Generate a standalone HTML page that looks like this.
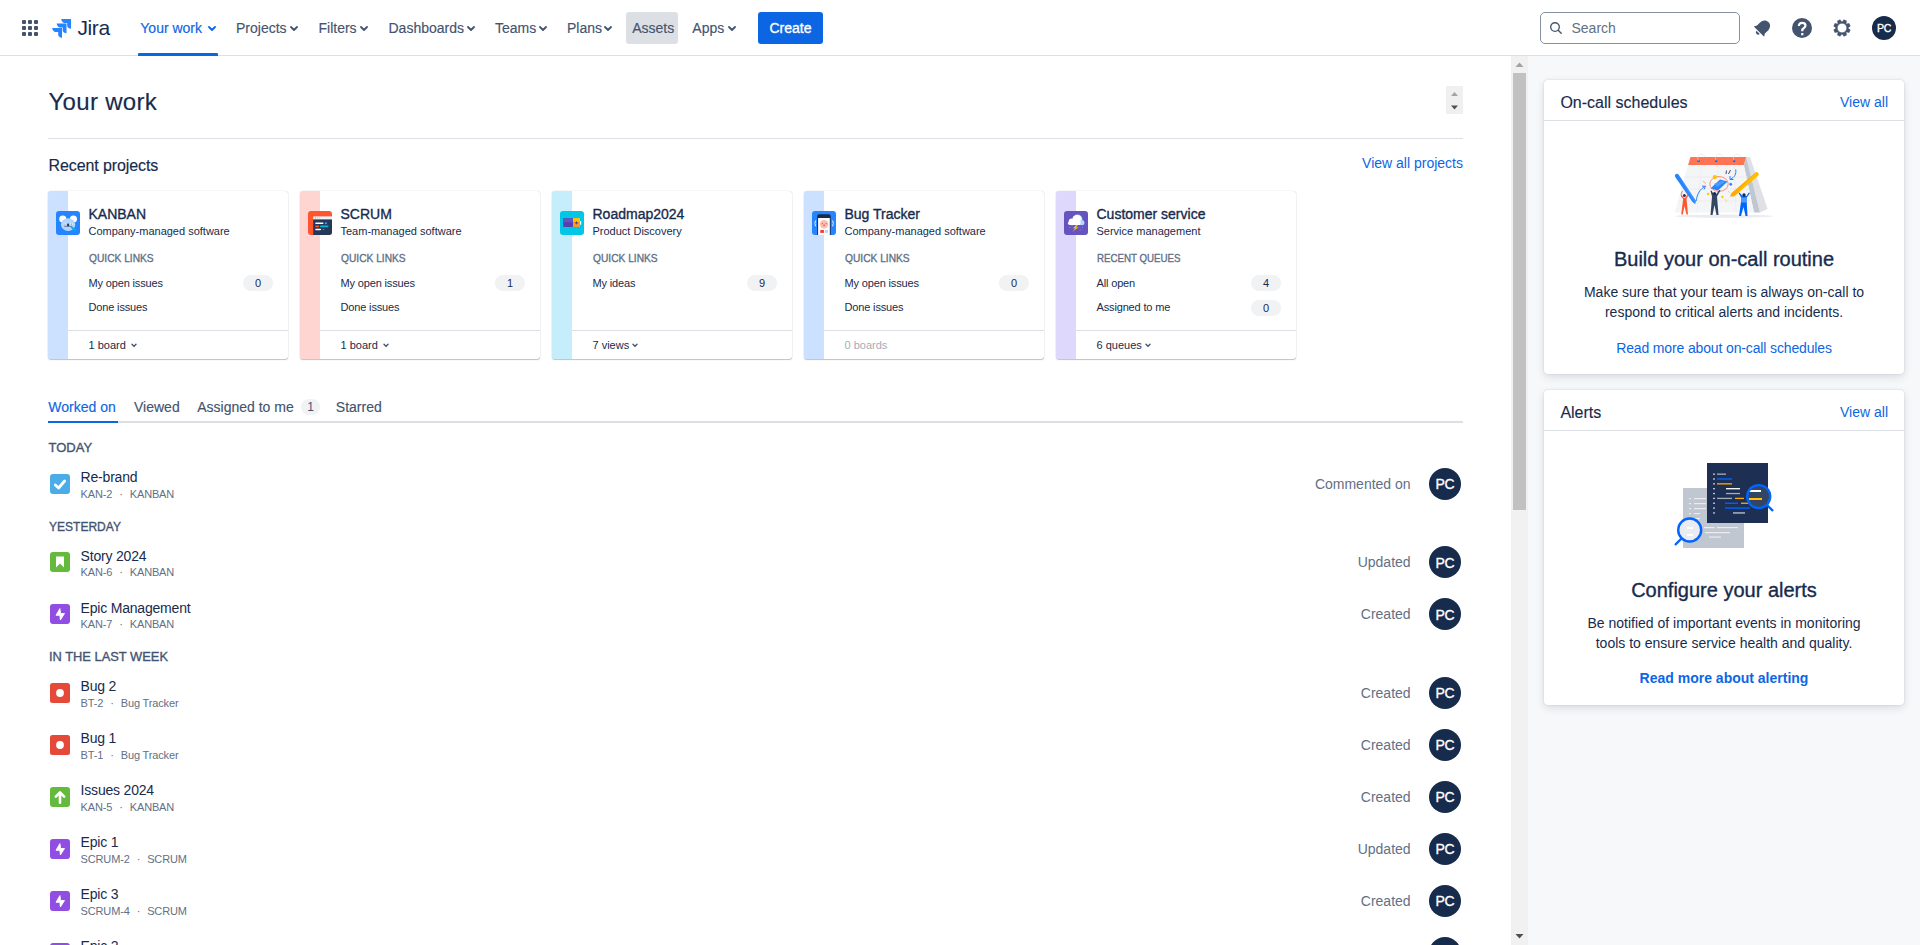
<!DOCTYPE html>
<html><head><meta charset="utf-8"><title>Your work - Jira</title>
<style>
html,body{margin:0;padding:0;width:1920px;height:945px;overflow:hidden;background:#fff}
body{position:relative;font-family:"Liberation Sans",sans-serif;-webkit-font-smoothing:antialiased}
.t{position:absolute;white-space:nowrap}
.dot{margin:0 7px}
.sb{-webkit-text-stroke:0.35px currentColor}
.sm{-webkit-text-stroke:0.15px currentColor}
</style></head><body>
<div style="position:absolute;left:0px;top:0px;width:1920px;height:56px;background:#fff"></div>
<div style="position:absolute;left:0px;top:55px;width:1920px;height:1px;background:#DCDFE4"></div>
<div style="position:absolute;left:22px;top:20px;width:4px;height:4px;background:#44546F;border-radius:1px"></div>
<div style="position:absolute;left:28px;top:20px;width:4px;height:4px;background:#44546F;border-radius:1px"></div>
<div style="position:absolute;left:34px;top:20px;width:4px;height:4px;background:#44546F;border-radius:1px"></div>
<div style="position:absolute;left:22px;top:26px;width:4px;height:4px;background:#44546F;border-radius:1px"></div>
<div style="position:absolute;left:28px;top:26px;width:4px;height:4px;background:#44546F;border-radius:1px"></div>
<div style="position:absolute;left:34px;top:26px;width:4px;height:4px;background:#44546F;border-radius:1px"></div>
<div style="position:absolute;left:22px;top:32px;width:4px;height:4px;background:#44546F;border-radius:1px"></div>
<div style="position:absolute;left:28px;top:32px;width:4px;height:4px;background:#44546F;border-radius:1px"></div>
<div style="position:absolute;left:34px;top:32px;width:4px;height:4px;background:#44546F;border-radius:1px"></div>
<svg style="position:absolute;left:52px;top:19px" width="20" height="20" viewBox="0 0 20 20">
<path d="M9.1 0.1 H19 V10 C19 10 17 9.6 16 8.6 C15.4 8 15.2 7 15.2 7 V4 H12.3 C12.3 4 11.2 3.8 10.5 3 C9.5 2 9.1 0.1 9.1 0.1Z" fill="#2684FF"/>
<path d="M4.6 4.6 H14.5 V14.5 C14.5 14.5 12.5 14.1 11.5 13.1 C10.9 12.5 10.7 11.5 10.7 11.5 V8.5 H7.8 C7.8 8.5 6.7 8.3 6 7.5 C5 6.5 4.6 4.6 4.6 4.6Z" fill="#2684FF"/>
<path d="M0.1 9.1 H10 V19 C10 19 8 18.6 7 17.6 C6.4 17 6.2 16 6.2 16 V13 H3.3 C3.3 13 2.2 12.8 1.5 12 C0.5 11 0.1 9.1 0.1 9.1Z" fill="#2684FF"/>
</svg>
<div class="t" style="left:77.5px;top:15.72px;font-size:21px;line-height:24px;color:#172B4D;font-weight:400;letter-spacing:-0.4px">Jira</div>
<div class="t sm" style="left:140.3px;top:18.15px;font-size:14px;line-height:20px;color:#0C66E4;font-weight:400;">Your work</div>
<svg style="position:absolute;left:208px;top:26px" width="8" height="5" viewBox="0 0 8 5"><path d="M1 1 L4 4 L7 1" fill="none" stroke="#0C66E4" stroke-width="1.8" stroke-linecap="round" stroke-linejoin="round"/></svg>
<div class="t sm" style="left:236px;top:18.15px;font-size:14px;line-height:20px;color:#44546F;font-weight:400;">Projects</div>
<svg style="position:absolute;left:290px;top:26px" width="8" height="5" viewBox="0 0 8 5"><path d="M1 1 L4 4 L7 1" fill="none" stroke="#44546F" stroke-width="1.8" stroke-linecap="round" stroke-linejoin="round"/></svg>
<div class="t sm" style="left:318.5px;top:18.15px;font-size:14px;line-height:20px;color:#44546F;font-weight:400;">Filters</div>
<svg style="position:absolute;left:360px;top:26px" width="8" height="5" viewBox="0 0 8 5"><path d="M1 1 L4 4 L7 1" fill="none" stroke="#44546F" stroke-width="1.8" stroke-linecap="round" stroke-linejoin="round"/></svg>
<div class="t sm" style="left:388.5px;top:18.15px;font-size:14px;line-height:20px;color:#44546F;font-weight:400;">Dashboards</div>
<svg style="position:absolute;left:467px;top:26px" width="8" height="5" viewBox="0 0 8 5"><path d="M1 1 L4 4 L7 1" fill="none" stroke="#44546F" stroke-width="1.8" stroke-linecap="round" stroke-linejoin="round"/></svg>
<div class="t sm" style="left:495px;top:18.15px;font-size:14px;line-height:20px;color:#44546F;font-weight:400;">Teams</div>
<svg style="position:absolute;left:539px;top:26px" width="8" height="5" viewBox="0 0 8 5"><path d="M1 1 L4 4 L7 1" fill="none" stroke="#44546F" stroke-width="1.8" stroke-linecap="round" stroke-linejoin="round"/></svg>
<div class="t sm" style="left:567px;top:18.15px;font-size:14px;line-height:20px;color:#44546F;font-weight:400;">Plans</div>
<svg style="position:absolute;left:604px;top:26px" width="8" height="5" viewBox="0 0 8 5"><path d="M1 1 L4 4 L7 1" fill="none" stroke="#44546F" stroke-width="1.8" stroke-linecap="round" stroke-linejoin="round"/></svg>
<div style="position:absolute;left:138px;top:53px;width:80px;height:3px;background:#0C66E4;border-radius:1px 1px 0 0"></div>
<div style="position:absolute;left:626px;top:12px;width:52px;height:32px;background:#DCDFE4;border-radius:3px"></div>
<div class="t sm" style="left:632.2px;top:18.15px;font-size:14px;line-height:20px;color:#44546F;font-weight:400;">Assets</div>
<div class="t sm" style="left:692.3px;top:18.15px;font-size:14px;line-height:20px;color:#44546F;font-weight:400;">Apps</div>
<svg style="position:absolute;left:728px;top:26px" width="8" height="5" viewBox="0 0 8 5"><path d="M1 1 L4 4 L7 1" fill="none" stroke="#44546F" stroke-width="1.8" stroke-linecap="round" stroke-linejoin="round"/></svg>
<div style="position:absolute;left:758px;top:12px;width:65px;height:32px;background:#0C66E4;border-radius:3px"></div>
<div class="t sb" style="left:758.0px;width:65px;text-align:center;top:18.15px;font-size:14px;line-height:20px;color:#fff;font-weight:400;">Create</div>
<div style="position:absolute;left:1540px;top:12px;width:200px;height:32px;box-sizing:border-box;border:1px solid #8590A2;border-radius:5px;background:#fff"></div>
<svg style="position:absolute;left:1549px;top:21px" width="14" height="14" viewBox="0 0 14 14"><circle cx="6" cy="6" r="4.3" fill="none" stroke="#44546F" stroke-width="1.35"/><path d="M9.2 9.2 L12.2 12.2" stroke="#44546F" stroke-width="1.4" stroke-linecap="round"/></svg>
<div class="t" style="left:1571.5px;top:18.15px;font-size:14px;line-height:20px;color:#626F86;font-weight:400;">Search</div>
<svg style="position:absolute;left:1752px;top:18px" width="20" height="20" viewBox="0 0 20 20"><g transform="translate(10.5 10) rotate(45) scale(1.12) translate(-10 -10)"><path d="M10 2.5 C6.8 2.5 5 5 5 8 V12 L3.5 14.5 H16.5 L15 12 V8 C15 5 13.2 2.5 10 2.5Z" fill="#44546F"/><path d="M8 15.5 A2 2 0 0 0 12 15.5Z" fill="#44546F"/></g></svg>
<svg style="position:absolute;left:1792px;top:18px" width="20" height="20" viewBox="0 0 20 20"><circle cx="10" cy="10" r="10" fill="#44546F"/><path d="M6.9 8 C6.9 5.9 8.3 4.8 10.2 4.8 C12.2 4.8 13.5 6 13.5 7.6 C13.5 9.5 11.5 9.9 10.3 11.5 V13.2" fill="none" stroke="#fff" stroke-width="2.2"/><rect x="9.2" y="15" width="2.2" height="2.3" fill="#fff"/></svg>
<svg style="position:absolute;left:1831.5px;top:17.5px" width="20" height="20" viewBox="0 0 20 20"><path d="M18.19 11.86 L17.10 14.48 L14.46 14.01 L14.02 14.46 L14.48 17.10 L11.86 18.19 L10.32 15.99 L9.69 15.99 L8.14 18.19 L5.52 17.10 L5.99 14.46 L5.54 14.02 L2.90 14.48 L1.81 11.86 L4.01 10.32 L4.01 9.69 L1.81 8.14 L2.90 5.52 L5.54 5.99 L5.98 5.54 L5.52 2.90 L8.14 1.81 L9.68 4.01 L10.31 4.01 L11.86 1.81 L14.48 2.90 L14.01 5.54 L14.46 5.98 L17.10 5.52 L18.19 8.14 L15.99 9.68 L15.99 10.31Z M10 5.2 A4.8 4.8 0 1 0 10 14.8 A4.8 4.8 0 1 0 10 5.2Z" fill="#44546F" fill-rule="evenodd" stroke="#44546F" stroke-width="0.6" stroke-linejoin="round"/></svg>
<div style="position:absolute;left:1872px;top:16px;width:24px;height:24px;background:#172B4D;border-radius:50%"></div>
<div class="t sb" style="left:1872.1px;width:24px;text-align:center;top:20.96px;font-size:10.5px;line-height:14px;color:#fff;font-weight:400;letter-spacing:-0.2px">PC</div>
<div style="position:absolute;left:0px;top:56px;width:1511px;height:889px;background:#fff"></div>
<div class="t sm" style="left:48.5px;top:87.88px;font-size:24px;line-height:28px;color:#172B4D;font-weight:400;letter-spacing:0.3px">Your work</div>
<div style="position:absolute;left:1446px;top:86px;width:17px;height:28px;background:#F0F0F0"></div>
<svg style="position:absolute;left:1450px;top:91px" width="9" height="20" viewBox="0 0 9 20"><path d="M1 4.9 L4.5 0.9 L8 4.9Z" fill="#A3A3A3"/><path d="M1 14.4 L8 14.4 L4.5 18.4Z" fill="#505050"/></svg>
<div style="position:absolute;left:48px;top:138px;width:1415px;height:1px;background:#DCDFE4"></div>
<div class="t sm" style="left:48.5px;top:156.25px;font-size:16px;line-height:20px;color:#172B4D;font-weight:400;letter-spacing:-0.1px">Recent projects</div>
<div class="t" style="right:457px;top:152.85px;font-size:14px;line-height:20px;color:#0C66E4;font-weight:400;">View all projects</div>
<div style="position:absolute;left:48px;top:191px;width:240px;height:168px;background:#fff;border-radius:3px;box-shadow:0 1px 1px rgba(9,30,66,0.25),0 0 1px rgba(9,30,66,0.31)"></div>
<div style="position:absolute;left:48px;top:191px;width:20px;height:168px;background:#CCE0FF;border-radius:3px 0 0 3px"></div>
<svg style="position:absolute;left:56px;top:211px" width="24" height="24" viewBox="0 0 24 24"><clipPath id="cp0"><rect width="24" height="24" rx="3"/></clipPath><g clip-path="url(#cp0)"><rect width="24" height="24" fill="#2684FF"/><circle cx="6.8" cy="8" r="3.6" fill="#fff"/><circle cx="17.4" cy="8" r="3.6" fill="#fff"/><ellipse cx="12.1" cy="13.6" rx="7.2" ry="6.3" fill="#B3D4FF"/><circle cx="8.9" cy="12.9" r="1.2" fill="#fff"/><circle cx="15.3" cy="12.9" r="1.2" fill="#fff"/><circle cx="8.9" cy="13" r="0.55" fill="#172B4D"/><circle cx="15.3" cy="13" r="0.55" fill="#172B4D"/><rect x="11.1" y="12.6" width="2" height="2.6" rx="0.8" fill="#253858"/><path d="M8.2 15.3 H15.5" stroke="#253858" stroke-width="0.6"/><path d="M15.5 16 L19 19.3" stroke="#00B8D9" stroke-width="1.8" stroke-linecap="round"/></g></svg>
<div class="t sb" style="left:88.5px;top:204.15px;font-size:14px;line-height:20px;color:#172B4D;font-weight:400;">KANBAN</div>
<div class="t" style="left:88.5px;top:222.69px;font-size:11px;line-height:16px;color:#172B4D;font-weight:400;">Company-managed software</div>
<div class="t sb" style="left:88.5px;top:250.19px;font-size:11px;line-height:16px;color:#626F86;font-weight:400;transform:scaleX(0.928);transform-origin:0 0">QUICK LINKS</div>
<div class="t" style="left:88.5px;top:275.19px;font-size:11px;line-height:16px;color:#172B4D;font-weight:400;letter-spacing:-0.15px">My open issues</div>
<div style="position:absolute;left:243px;top:275px;width:30px;height:16px;background:#F1F2F4;border-radius:8px"></div>
<div class="t" style="left:243.0px;width:30px;text-align:center;top:275.19px;font-size:11px;line-height:16px;color:#172B4D;font-weight:400;">0</div>
<div class="t" style="left:88.5px;top:299.19px;font-size:11px;line-height:16px;color:#172B4D;font-weight:400;letter-spacing:-0.15px">Done issues</div>
<div style="position:absolute;left:68px;top:330px;width:220px;height:1px;background:#DCDFE4"></div>
<div class="t" style="left:88.5px;top:336.89px;font-size:11px;line-height:16px;color:#172B4D;font-weight:400;">1 board</div>
<svg style="position:absolute;left:131px;top:343px" width="6" height="5" viewBox="0 0 6 5"><path d="M1 1.2 L3 3.4 L5 1.2" fill="none" stroke="#44546F" stroke-width="1.4" stroke-linecap="round" stroke-linejoin="round"/></svg>
<div style="position:absolute;left:300px;top:191px;width:240px;height:168px;background:#fff;border-radius:3px;box-shadow:0 1px 1px rgba(9,30,66,0.25),0 0 1px rgba(9,30,66,0.31)"></div>
<div style="position:absolute;left:300px;top:191px;width:20px;height:168px;background:#FFD5D2;border-radius:3px 0 0 3px"></div>
<svg style="position:absolute;left:308px;top:211px" width="24" height="24" viewBox="0 0 24 24"><clipPath id="cp1"><rect width="24" height="24" rx="3"/></clipPath><g clip-path="url(#cp1)"><rect width="24" height="24" fill="#FF5630"/><rect x="5.2" y="8.3" width="19" height="16" fill="#253858"/><rect x="5.2" y="5.4" width="19" height="2.9" fill="#EBF5FF"/><rect x="7" y="6.3" width="1" height="1.2" fill="#FF8F73"/><rect x="8.9" y="6.3" width="1" height="1.2" fill="#FFC400"/><rect x="10.8" y="6.3" width="1" height="1.2" fill="#79E2F2"/><rect x="7.2" y="11.4" width="8.4" height="1.7" rx="0.8" fill="#fff"/><rect x="17" y="11.4" width="1.9" height="1.7" fill="#4C9AFF"/><rect x="7.2" y="14.6" width="3.9" height="1.6" rx="0.8" fill="#FF5630"/><rect x="12" y="14.6" width="8.5" height="1.6" rx="0.8" fill="#00B8D9"/><rect x="7.2" y="17.7" width="5.9" height="1.6" rx="0.8" fill="#fff"/><path d="M14.5 18 L16.5 18 L15.5 19.5Z" fill="#FF5630"/></g></svg>
<div class="t sb" style="left:340.5px;top:204.15px;font-size:14px;line-height:20px;color:#172B4D;font-weight:400;">SCRUM</div>
<div class="t" style="left:340.5px;top:222.69px;font-size:11px;line-height:16px;color:#172B4D;font-weight:400;">Team-managed software</div>
<div class="t sb" style="left:340.5px;top:250.19px;font-size:11px;line-height:16px;color:#626F86;font-weight:400;transform:scaleX(0.928);transform-origin:0 0">QUICK LINKS</div>
<div class="t" style="left:340.5px;top:275.19px;font-size:11px;line-height:16px;color:#172B4D;font-weight:400;letter-spacing:-0.15px">My open issues</div>
<div style="position:absolute;left:495px;top:275px;width:30px;height:16px;background:#F1F2F4;border-radius:8px"></div>
<div class="t" style="left:495.0px;width:30px;text-align:center;top:275.19px;font-size:11px;line-height:16px;color:#172B4D;font-weight:400;">1</div>
<div class="t" style="left:340.5px;top:299.19px;font-size:11px;line-height:16px;color:#172B4D;font-weight:400;letter-spacing:-0.15px">Done issues</div>
<div style="position:absolute;left:320px;top:330px;width:220px;height:1px;background:#DCDFE4"></div>
<div class="t" style="left:340.5px;top:336.89px;font-size:11px;line-height:16px;color:#172B4D;font-weight:400;">1 board</div>
<svg style="position:absolute;left:383px;top:343px" width="6" height="5" viewBox="0 0 6 5"><path d="M1 1.2 L3 3.4 L5 1.2" fill="none" stroke="#44546F" stroke-width="1.4" stroke-linecap="round" stroke-linejoin="round"/></svg>
<div style="position:absolute;left:552px;top:191px;width:240px;height:168px;background:#fff;border-radius:3px;box-shadow:0 1px 1px rgba(9,30,66,0.25),0 0 1px rgba(9,30,66,0.31)"></div>
<div style="position:absolute;left:552px;top:191px;width:20px;height:168px;background:#C6EDFB;border-radius:3px 0 0 3px"></div>
<svg style="position:absolute;left:560px;top:211px" width="24" height="24" viewBox="0 0 24 24"><clipPath id="cp2"><rect width="24" height="24" rx="3"/></clipPath><g clip-path="url(#cp2)"><rect width="24" height="24" fill="#00C7E6"/><rect x="3.1" y="7.2" width="10" height="8.7" rx="0.8" fill="#5243AA"/><rect x="3.1" y="7.2" width="10" height="4" fill="#6554C0"/><rect x="13" y="7.2" width="7" height="8.7" fill="#FF991F"/><rect x="13" y="7.2" width="7" height="3.5" fill="#FFC400"/><rect x="20" y="10" width="1.2" height="3.7" fill="#fff"/><path d="M16.5 10 L17.2 11.3 L18.5 11.9 L17.2 12.5 L16.5 13.8 L15.8 12.5 L14.5 11.9 L15.8 11.3Z" fill="#5243AA"/></g></svg>
<div class="t sb" style="left:592.5px;top:204.15px;font-size:14px;line-height:20px;color:#172B4D;font-weight:400;">Roadmap2024</div>
<div class="t" style="left:592.5px;top:222.69px;font-size:11px;line-height:16px;color:#172B4D;font-weight:400;">Product Discovery</div>
<div class="t sb" style="left:592.5px;top:250.19px;font-size:11px;line-height:16px;color:#626F86;font-weight:400;transform:scaleX(0.928);transform-origin:0 0">QUICK LINKS</div>
<div class="t" style="left:592.5px;top:275.19px;font-size:11px;line-height:16px;color:#172B4D;font-weight:400;letter-spacing:-0.15px">My ideas</div>
<div style="position:absolute;left:747px;top:275px;width:30px;height:16px;background:#F1F2F4;border-radius:8px"></div>
<div class="t" style="left:747.0px;width:30px;text-align:center;top:275.19px;font-size:11px;line-height:16px;color:#172B4D;font-weight:400;">9</div>
<div style="position:absolute;left:572px;top:330px;width:220px;height:1px;background:#DCDFE4"></div>
<div class="t" style="left:592.5px;top:336.89px;font-size:11px;line-height:16px;color:#172B4D;font-weight:400;">7 views</div>
<svg style="position:absolute;left:631.5px;top:343px" width="6" height="5" viewBox="0 0 6 5"><path d="M1 1.2 L3 3.4 L5 1.2" fill="none" stroke="#44546F" stroke-width="1.4" stroke-linecap="round" stroke-linejoin="round"/></svg>
<div style="position:absolute;left:804px;top:191px;width:240px;height:168px;background:#fff;border-radius:3px;box-shadow:0 1px 1px rgba(9,30,66,0.25),0 0 1px rgba(9,30,66,0.31)"></div>
<div style="position:absolute;left:804px;top:191px;width:20px;height:168px;background:#CCE0FF;border-radius:3px 0 0 3px"></div>
<svg style="position:absolute;left:812px;top:211px" width="24" height="24" viewBox="0 0 24 24"><clipPath id="cp3"><rect width="24" height="24" rx="3"/></clipPath><g clip-path="url(#cp3)"><rect width="24" height="24" fill="#2684FF"/><path d="M5.2 24 V5.5 C5.2 4.2 6 3.3 7.3 3.3 H16.6 C17.9 3.3 18.7 4.2 18.7 5.5 V24Z" fill="#172B4D"/><rect x="6.1" y="7" width="11.7" height="17" fill="#fff"/><circle cx="12.1" cy="13.3" r="4.2" fill="#FFBDAD"/><circle cx="10.4" cy="12.6" r="0.6" fill="#6B778C"/><circle cx="14.1" cy="12.6" r="0.6" fill="#6B778C"/><circle cx="12.1" cy="14.3" r="0.9" fill="#FF5630"/><rect x="8.3" y="19" width="3.6" height="2.9" fill="#FF3333"/><rect x="13" y="19" width="2.9" height="2.9" fill="#B3D4FF"/><path d="M3.6 9.5 Q2.2 12.4 3.6 15.3 M20.6 9.5 Q22 12.4 20.6 15.3" stroke="#fff" stroke-width="0.9" fill="none"/></g></svg>
<div class="t sb" style="left:844.5px;top:204.15px;font-size:14px;line-height:20px;color:#172B4D;font-weight:400;">Bug Tracker</div>
<div class="t" style="left:844.5px;top:222.69px;font-size:11px;line-height:16px;color:#172B4D;font-weight:400;">Company-managed software</div>
<div class="t sb" style="left:844.5px;top:250.19px;font-size:11px;line-height:16px;color:#626F86;font-weight:400;transform:scaleX(0.928);transform-origin:0 0">QUICK LINKS</div>
<div class="t" style="left:844.5px;top:275.19px;font-size:11px;line-height:16px;color:#172B4D;font-weight:400;letter-spacing:-0.15px">My open issues</div>
<div style="position:absolute;left:999px;top:275px;width:30px;height:16px;background:#F1F2F4;border-radius:8px"></div>
<div class="t" style="left:999.0px;width:30px;text-align:center;top:275.19px;font-size:11px;line-height:16px;color:#172B4D;font-weight:400;">0</div>
<div class="t" style="left:844.5px;top:299.19px;font-size:11px;line-height:16px;color:#172B4D;font-weight:400;letter-spacing:-0.15px">Done issues</div>
<div style="position:absolute;left:824px;top:330px;width:220px;height:1px;background:#DCDFE4"></div>
<div class="t" style="left:844.5px;top:336.89px;font-size:11px;line-height:16px;color:#A5ADBA;font-weight:400;">0 boards</div>
<div style="position:absolute;left:1056px;top:191px;width:240px;height:168px;background:#fff;border-radius:3px;box-shadow:0 1px 1px rgba(9,30,66,0.25),0 0 1px rgba(9,30,66,0.31)"></div>
<div style="position:absolute;left:1056px;top:191px;width:20px;height:168px;background:#DFD8FD;border-radius:3px 0 0 3px"></div>
<svg style="position:absolute;left:1064px;top:211px" width="24" height="24" viewBox="0 0 24 24"><clipPath id="cp4"><rect width="24" height="24" rx="3"/></clipPath><g clip-path="url(#cp4)"><rect width="24" height="24" fill="#6554C0"/><circle cx="8" cy="10.8" r="3.4" fill="#fff"/><circle cx="13.6" cy="8.4" r="4.8" fill="#B3D4FF"/><circle cx="13" cy="8.6" r="4.6" fill="#fff"/><circle cx="17.8" cy="11.6" r="2.6" fill="#B3D4FF"/><rect x="4" y="10.4" width="15.8" height="3.6" rx="1.8" fill="#fff"/><path d="M17 10 A2.6 2.6 0 0 1 19.8 13 L19 14 H16Z" fill="#B3D4FF"/><path d="M12.2 14 L8.8 17.5 L11.6 17.2 L8.3 20.7 L14.8 16.3 L12.2 16.5 L13.7 14Z" fill="#FFC400"/><rect x="5.2" y="16" width="0.9" height="1" fill="#998DD9"/><rect x="18" y="16" width="0.9" height="1" fill="#998DD9"/><rect x="15.8" y="18.6" width="0.9" height="1" fill="#998DD9"/></g></svg>
<div class="t sb" style="left:1096.5px;top:204.15px;font-size:14px;line-height:20px;color:#172B4D;font-weight:400;">Customer service</div>
<div class="t" style="left:1096.5px;top:222.69px;font-size:11px;line-height:16px;color:#172B4D;font-weight:400;">Service management</div>
<div class="t sb" style="left:1096.5px;top:250.19px;font-size:11px;line-height:16px;color:#626F86;font-weight:400;transform:scaleX(0.884);transform-origin:0 0">RECENT QUEUES</div>
<div class="t" style="left:1096.5px;top:275.19px;font-size:11px;line-height:16px;color:#172B4D;font-weight:400;letter-spacing:-0.15px">All open</div>
<div style="position:absolute;left:1251px;top:275px;width:30px;height:16px;background:#F1F2F4;border-radius:8px"></div>
<div class="t" style="left:1251.0px;width:30px;text-align:center;top:275.19px;font-size:11px;line-height:16px;color:#172B4D;font-weight:400;">4</div>
<div class="t" style="left:1096.5px;top:299.19px;font-size:11px;line-height:16px;color:#172B4D;font-weight:400;letter-spacing:-0.15px">Assigned to me</div>
<div style="position:absolute;left:1251px;top:300px;width:30px;height:16px;background:#F1F2F4;border-radius:8px"></div>
<div class="t" style="left:1251.0px;width:30px;text-align:center;top:300.19px;font-size:11px;line-height:16px;color:#172B4D;font-weight:400;">0</div>
<div style="position:absolute;left:1076px;top:330px;width:220px;height:1px;background:#DCDFE4"></div>
<div class="t" style="left:1096.5px;top:336.89px;font-size:11px;line-height:16px;color:#172B4D;font-weight:400;">6 queues</div>
<svg style="position:absolute;left:1145px;top:343px" width="6" height="5" viewBox="0 0 6 5"><path d="M1 1.2 L3 3.4 L5 1.2" fill="none" stroke="#44546F" stroke-width="1.4" stroke-linecap="round" stroke-linejoin="round"/></svg>

<div style="position:absolute;left:48px;top:421px;width:1415px;height:2px;background:#DCDFE4"></div>
<div style="position:absolute;left:48px;top:421px;width:70px;height:2px;background:#0C66E4"></div>
<div class="t sm" style="left:48.3px;top:397.15px;font-size:14px;line-height:20px;color:#0C66E4;font-weight:400;">Worked on</div>
<div class="t sm" style="left:134px;top:397.15px;font-size:14px;line-height:20px;color:#44546F;font-weight:400;">Viewed</div>
<div class="t sm" style="left:197.2px;top:397.15px;font-size:14px;line-height:20px;color:#44546F;font-weight:400;">Assigned to me</div>
<div style="position:absolute;left:301px;top:399px;width:19px;height:16px;background:#F1F2F4;border-radius:8px"></div>
<div class="t" style="left:301.0px;width:19px;text-align:center;top:398.84px;font-size:12px;line-height:16px;color:#44546F;font-weight:400;">1</div>
<div class="t sm" style="left:335.8px;top:397.15px;font-size:14px;line-height:20px;color:#44546F;font-weight:400;">Starred</div>
<div class="t sb" style="left:48.5px;top:438.49px;font-size:13px;line-height:20px;color:#44546F;font-weight:400;transform:scaleX(1.0);transform-origin:0 0">TODAY</div>
<div class="t sb" style="left:48.5px;top:517.49px;font-size:13px;line-height:20px;color:#44546F;font-weight:400;transform:scaleX(0.925);transform-origin:0 0">YESTERDAY</div>
<div class="t sb" style="left:48.5px;top:647.49px;font-size:13px;line-height:20px;color:#44546F;font-weight:400;transform:scaleX(0.99);transform-origin:0 0">IN THE LAST WEEK</div>
<svg style="position:absolute;left:50px;top:473.6px" width="20" height="20" viewBox="0 0 20 20"><rect width="20" height="20" rx="3" fill="#4BADE8"/><path d="M5.3 10.9 L8.6 14 L14.6 7" fill="none" stroke="#fff" stroke-width="2.8" stroke-linecap="round" stroke-linejoin="round"/></svg>
<div class="t" style="left:80.6px;top:467.25px;font-size:14px;line-height:20px;color:#172B4D;font-weight:400;letter-spacing:-0.2px">Re-brand</div>
<div class="t" style="left:80.6px;top:485.99px;font-size:11px;line-height:16px;color:#626F86;font-weight:400;letter-spacing:-0.15px">KAN-2<span class="dot">&middot;</span>KANBAN</div>
<div class="t" style="right:509.4000000000001px;top:473.75px;font-size:14px;line-height:20px;color:#626F86;font-weight:400;">Commented on</div>
<div style="position:absolute;left:1429px;top:467.6px;width:32px;height:32px;background:#172B4D;border-radius:50%"></div>
<div class="t sb" style="left:1429.0px;width:32px;text-align:center;top:476.25px;font-size:14px;line-height:16px;color:#fff;font-weight:400;letter-spacing:-0.3px">PC</div>
<svg style="position:absolute;left:50px;top:552px" width="20" height="20" viewBox="0 0 20 20"><rect width="20" height="20" rx="3" fill="#63BA3C"/><path d="M6 4.5 H14 V15.5 L10 11.5 L6 15.5Z" fill="#fff"/></svg>
<div class="t" style="left:80.6px;top:545.65px;font-size:14px;line-height:20px;color:#172B4D;font-weight:400;letter-spacing:-0.2px">Story 2024</div>
<div class="t" style="left:80.6px;top:564.39px;font-size:11px;line-height:16px;color:#626F86;font-weight:400;letter-spacing:-0.15px">KAN-6<span class="dot">&middot;</span>KANBAN</div>
<div class="t" style="right:509.4000000000001px;top:552.15px;font-size:14px;line-height:20px;color:#626F86;font-weight:400;">Updated</div>
<div style="position:absolute;left:1429px;top:546px;width:32px;height:32px;background:#172B4D;border-radius:50%"></div>
<div class="t sb" style="left:1429.0px;width:32px;text-align:center;top:554.65px;font-size:14px;line-height:16px;color:#fff;font-weight:400;letter-spacing:-0.3px">PC</div>
<svg style="position:absolute;left:50px;top:604px" width="20" height="20" viewBox="0 0 20 20"><rect width="20" height="20" rx="3" fill="#904EE2"/><path d="M9.9 4.6 L6 11.3 H9.9 L10.4 16 L14.5 9.5 H10.6Z" fill="#fff" stroke="#fff" stroke-width="0.9" stroke-linejoin="round"/></svg>
<div class="t" style="left:80.6px;top:597.65px;font-size:14px;line-height:20px;color:#172B4D;font-weight:400;letter-spacing:-0.2px">Epic Management</div>
<div class="t" style="left:80.6px;top:616.39px;font-size:11px;line-height:16px;color:#626F86;font-weight:400;letter-spacing:-0.15px">KAN-7<span class="dot">&middot;</span>KANBAN</div>
<div class="t" style="right:509.4000000000001px;top:604.15px;font-size:14px;line-height:20px;color:#626F86;font-weight:400;">Created</div>
<div style="position:absolute;left:1429px;top:598px;width:32px;height:32px;background:#172B4D;border-radius:50%"></div>
<div class="t sb" style="left:1429.0px;width:32px;text-align:center;top:606.65px;font-size:14px;line-height:16px;color:#fff;font-weight:400;letter-spacing:-0.3px">PC</div>
<svg style="position:absolute;left:50px;top:682.5px" width="20" height="20" viewBox="0 0 20 20"><rect width="20" height="20" rx="2.5" fill="#E5493A"/><circle cx="10" cy="10" r="3.9" fill="#fff"/></svg>
<div class="t" style="left:80.6px;top:676.15px;font-size:14px;line-height:20px;color:#172B4D;font-weight:400;letter-spacing:-0.2px">Bug 2</div>
<div class="t" style="left:80.6px;top:694.89px;font-size:11px;line-height:16px;color:#626F86;font-weight:400;letter-spacing:-0.15px">BT-2<span class="dot">&middot;</span>Bug Tracker</div>
<div class="t" style="right:509.4000000000001px;top:682.65px;font-size:14px;line-height:20px;color:#626F86;font-weight:400;">Created</div>
<div style="position:absolute;left:1429px;top:676.5px;width:32px;height:32px;background:#172B4D;border-radius:50%"></div>
<div class="t sb" style="left:1429.0px;width:32px;text-align:center;top:685.15px;font-size:14px;line-height:16px;color:#fff;font-weight:400;letter-spacing:-0.3px">PC</div>
<svg style="position:absolute;left:50px;top:734.5px" width="20" height="20" viewBox="0 0 20 20"><rect width="20" height="20" rx="2.5" fill="#E5493A"/><circle cx="10" cy="10" r="3.9" fill="#fff"/></svg>
<div class="t" style="left:80.6px;top:728.15px;font-size:14px;line-height:20px;color:#172B4D;font-weight:400;letter-spacing:-0.2px">Bug 1</div>
<div class="t" style="left:80.6px;top:746.89px;font-size:11px;line-height:16px;color:#626F86;font-weight:400;letter-spacing:-0.15px">BT-1<span class="dot">&middot;</span>Bug Tracker</div>
<div class="t" style="right:509.4000000000001px;top:734.65px;font-size:14px;line-height:20px;color:#626F86;font-weight:400;">Created</div>
<div style="position:absolute;left:1429px;top:728.5px;width:32px;height:32px;background:#172B4D;border-radius:50%"></div>
<div class="t sb" style="left:1429.0px;width:32px;text-align:center;top:737.15px;font-size:14px;line-height:16px;color:#fff;font-weight:400;letter-spacing:-0.3px">PC</div>
<svg style="position:absolute;left:50px;top:786.5px" width="20" height="20" viewBox="0 0 20 20"><rect width="20" height="20" rx="3" fill="#63BA3C"/><path d="M10 15.8 V5.6 M5.8 9.6 L10 5.4 L14.2 9.6" fill="none" stroke="#fff" stroke-width="2.6" stroke-linecap="round" stroke-linejoin="round"/></svg>
<div class="t" style="left:80.6px;top:780.15px;font-size:14px;line-height:20px;color:#172B4D;font-weight:400;letter-spacing:-0.2px">Issues 2024</div>
<div class="t" style="left:80.6px;top:798.89px;font-size:11px;line-height:16px;color:#626F86;font-weight:400;letter-spacing:-0.15px">KAN-5<span class="dot">&middot;</span>KANBAN</div>
<div class="t" style="right:509.4000000000001px;top:786.65px;font-size:14px;line-height:20px;color:#626F86;font-weight:400;">Created</div>
<div style="position:absolute;left:1429px;top:780.5px;width:32px;height:32px;background:#172B4D;border-radius:50%"></div>
<div class="t sb" style="left:1429.0px;width:32px;text-align:center;top:789.15px;font-size:14px;line-height:16px;color:#fff;font-weight:400;letter-spacing:-0.3px">PC</div>
<svg style="position:absolute;left:50px;top:838.5px" width="20" height="20" viewBox="0 0 20 20"><rect width="20" height="20" rx="3" fill="#904EE2"/><path d="M9.9 4.6 L6 11.3 H9.9 L10.4 16 L14.5 9.5 H10.6Z" fill="#fff" stroke="#fff" stroke-width="0.9" stroke-linejoin="round"/></svg>
<div class="t" style="left:80.6px;top:832.15px;font-size:14px;line-height:20px;color:#172B4D;font-weight:400;letter-spacing:-0.2px">Epic 1</div>
<div class="t" style="left:80.6px;top:850.89px;font-size:11px;line-height:16px;color:#626F86;font-weight:400;letter-spacing:-0.15px">SCRUM-2<span class="dot">&middot;</span>SCRUM</div>
<div class="t" style="right:509.4000000000001px;top:838.65px;font-size:14px;line-height:20px;color:#626F86;font-weight:400;">Updated</div>
<div style="position:absolute;left:1429px;top:832.5px;width:32px;height:32px;background:#172B4D;border-radius:50%"></div>
<div class="t sb" style="left:1429.0px;width:32px;text-align:center;top:841.15px;font-size:14px;line-height:16px;color:#fff;font-weight:400;letter-spacing:-0.3px">PC</div>
<svg style="position:absolute;left:50px;top:890.5px" width="20" height="20" viewBox="0 0 20 20"><rect width="20" height="20" rx="3" fill="#904EE2"/><path d="M9.9 4.6 L6 11.3 H9.9 L10.4 16 L14.5 9.5 H10.6Z" fill="#fff" stroke="#fff" stroke-width="0.9" stroke-linejoin="round"/></svg>
<div class="t" style="left:80.6px;top:884.15px;font-size:14px;line-height:20px;color:#172B4D;font-weight:400;letter-spacing:-0.2px">Epic 3</div>
<div class="t" style="left:80.6px;top:902.89px;font-size:11px;line-height:16px;color:#626F86;font-weight:400;letter-spacing:-0.15px">SCRUM-4<span class="dot">&middot;</span>SCRUM</div>
<div class="t" style="right:509.4000000000001px;top:890.65px;font-size:14px;line-height:20px;color:#626F86;font-weight:400;">Created</div>
<div style="position:absolute;left:1429px;top:884.5px;width:32px;height:32px;background:#172B4D;border-radius:50%"></div>
<div class="t sb" style="left:1429.0px;width:32px;text-align:center;top:893.15px;font-size:14px;line-height:16px;color:#fff;font-weight:400;letter-spacing:-0.3px">PC</div>
<svg style="position:absolute;left:50px;top:942.5px" width="20" height="20" viewBox="0 0 20 20"><rect width="20" height="20" rx="3" fill="#904EE2"/><path d="M9.9 4.6 L6 11.3 H9.9 L10.4 16 L14.5 9.5 H10.6Z" fill="#fff" stroke="#fff" stroke-width="0.9" stroke-linejoin="round"/></svg>
<div class="t" style="left:80.6px;top:936.15px;font-size:14px;line-height:20px;color:#172B4D;font-weight:400;letter-spacing:-0.2px">Epic 2</div>
<div class="t" style="left:80.6px;top:954.89px;font-size:11px;line-height:16px;color:#626F86;font-weight:400;letter-spacing:-0.15px">SCRUM-3<span class="dot">&middot;</span>SCRUM</div>
<div class="t" style="right:509.4000000000001px;top:942.65px;font-size:14px;line-height:20px;color:#626F86;font-weight:400;">Created</div>
<div style="position:absolute;left:1429px;top:936.5px;width:32px;height:32px;background:#172B4D;border-radius:50%"></div>
<div class="t sb" style="left:1429.0px;width:32px;text-align:center;top:945.15px;font-size:14px;line-height:16px;color:#fff;font-weight:400;letter-spacing:-0.3px">PC</div>
<div style="position:absolute;left:1511px;top:56px;width:17px;height:889px;background:#F1F1F1"></div>
<div style="position:absolute;left:1513px;top:73px;width:13px;height:437px;background:#C1C1C1"></div>
<svg style="position:absolute;left:1515px;top:61px" width="9" height="7" viewBox="0 0 9 7"><path d="M0.5 6 L4.5 1.5 L8.5 6Z" fill="#A3A3A3"/></svg>
<svg style="position:absolute;left:1515px;top:933px" width="9" height="7" viewBox="0 0 9 7"><path d="M0.5 1 L8.5 1 L4.5 5.5Z" fill="#505050"/></svg>
<div style="position:absolute;left:1528px;top:56px;width:392px;height:889px;background:#F7F8F9"></div>
<div style="position:absolute;left:1544px;top:80px;width:360px;height:294px;background:#fff;border-radius:4px;box-shadow:0 3px 8px rgba(9,30,66,0.13),0 0 2px rgba(9,30,66,0.16)"></div>
<div class="t sm" style="left:1560.4px;top:92.65px;font-size:16px;line-height:20px;color:#172B4D;font-weight:400;">On-call schedules</div>
<div class="t" style="right:32px;top:91.85px;font-size:14px;line-height:20px;color:#0C66E4;font-weight:400;">View all</div>
<div style="position:absolute;left:1544px;top:120px;width:360px;height:1px;background:#DCDFE4"></div>
<svg style="position:absolute;left:1670px;top:150px" width="110" height="72" viewBox="0 0 110 72">
<ellipse cx="54" cy="66.2" rx="49" ry="1.6" fill="#EBECF0"/>
<path d="M76.2 7 L80 7 L97.6 59 L90 62.4Z" fill="#DFE1E6"/>
<path d="M76.2 7 L90 62.4 L84 62.4 L73.8 15Z" fill="#C1C7D0"/>
<path d="M18.1 15 H73.8 L84 62.4 H4.8Z" fill="#F4F5F7"/>
<path d="M20.5 7 H76.2 L73.8 15 H18.1Z" fill="#FF7452"/>
<g stroke="#E4E6EA" stroke-width="0.5"><path d="M14 27 H78 M11 39 H80 M8 51 H82"/><path d="M32 15 L27 62 M48 15 L46 62 M64 15 L66 62"/></g>
<circle cx="28.6" cy="10.9" r="1.2" fill="#0065FF"/><circle cx="46.2" cy="10.9" r="1.2" fill="#0065FF"/><circle cx="64.1" cy="10.9" r="1.2" fill="#0065FF"/>
<path d="M28.6 10.9 C25 4 33 2 35 7 M46.2 10.9 C43 4 51 2 53 7 M64.1 10.9 C61 4 69 2 71 7" fill="none" stroke="#DFE1E6" stroke-width="0.6"/>
<path d="M5.2 27 C4 25 6.5 22.5 8.5 24.5 L26 51 L25 54 L22.5 52Z" fill="#2684FF"/>
<path d="M8.5 24.5 L26 51 L25 54 L17 40Z" fill="#4C9AFF" opacity="0.6"/>
<path d="M85.5 22.6 C87.5 21.5 89.5 23.8 88.2 25.6 L64 46.5 L60 46.5 L61.5 43Z" fill="#FFAB00"/>
<path d="M85.5 22.6 C87.5 21.5 89.5 23.8 88.2 25.6 L64 46.5 L73 36Z" fill="#FFC400" opacity="0.8"/>
<path d="M40.5 38.5 L50 29.5 L57.6 31.5 L48 40.5Z" fill="#2684FF"/>
<path d="M44 34 L52 30.5 L55 32 L47 37Z" fill="#4C9AFF"/>
<ellipse cx="49" cy="34" rx="9.2" ry="7.4" fill="none" stroke="#FF7452" stroke-width="0.8"/>
<circle cx="44.8" cy="27.1" r="2.1" fill="#FFC400"/>
<path d="M26.2 51 C27 44 30 39 34.8 36.7 M32 36 L35.5 36.5 L34 39.5" fill="none" stroke="#2684FF" stroke-width="1"/>
<path d="M65.7 19.5 C66.5 24 64.5 27.5 60.5 29 M60 26 L60 29.5 L63.5 29.5" fill="none" stroke="#2684FF" stroke-width="1"/>
<path d="M56.5 20.5 L56 24 M60.5 20 L58.5 24" stroke="#253858" stroke-width="0.9"/>
<path d="M36.5 44 L38.1 42.4 L39.7 44 L38.1 45.6Z" fill="#FFC400"/><path d="M51 47 L52.4 45.5 L53.8 47 L52.4 48.5Z" fill="#FFC400"/>
<path d="M59 34 L61 32.5 L62.5 34.5 L60.5 36Z" fill="#2684FF"/>
<path d="M33 31 L36 33.5 M33.5 36 L36.5 36" stroke="#FF7452" stroke-width="0.6"/>
<path d="M55 49 L57 52 M58 41 L60 43" stroke="#FFC400" stroke-width="0.6"/>
<path d="M12.5 41 C10.5 44 11 48 14 48.5 C17 48.5 18.5 45 16.8 41.5" fill="none" stroke="#FF5630" stroke-width="0.9"/>
<path d="M13.2 48.5 L11.2 64.5 H12.8 L14.5 56 L16.5 64.5 H18 L16.5 48.5 L18 46 L17 45.5 L15.2 48 H13.8 L12 45.5 L11 46Z" fill="#FF5630"/>
<circle cx="14.4" cy="45.6" r="1.5" fill="#253858"/>
<path d="M42 46.5 L40.5 65 H42.5 L44.5 55 L46.5 65 H48.5 L47 46.5 L50.5 40.5 L49.2 40 L46.5 44 H43.5 L41.5 40.5 L40.5 41Z" fill="#344563"/>
<circle cx="44.5" cy="43.6" r="1.6" fill="#172B4D"/>
<path d="M71.5 48 L69 66 H71 L73.5 57 L75.5 66 H77.5 L76.5 48 L80 43 L78.8 42.5 L76.5 46 H72.5 L69.5 42.5 L68.5 43Z" fill="#0065FF"/>
<path d="M71.6 47.5 H76.5 L77 52.5 H71Z" fill="#4C9AFF"/>
<circle cx="74" cy="45" r="1.7" fill="#172B4D"/>
</svg>
<div class="t sb" style="left:1554.0px;width:340px;text-align:center;top:246.87px;font-size:20px;line-height:24px;color:#172B4D;font-weight:400;">Build your on-call routine</div>
<div class="t" style="left:1554.0px;width:340px;text-align:center;top:281.95px;font-size:14px;line-height:20px;color:#172B4D;font-weight:400;">Make sure that your team is always on-call to</div>
<div class="t" style="left:1554.0px;width:340px;text-align:center;top:301.85px;font-size:14px;line-height:20px;color:#172B4D;font-weight:400;">respond to critical alerts and incidents.</div>
<div class="t" style="left:1554.0px;width:340px;text-align:center;top:338.15px;font-size:14px;line-height:20px;color:#0C66E4;font-weight:400;letter-spacing:-0.14px">Read more about on-call schedules</div>
<div style="position:absolute;left:1544px;top:390px;width:360px;height:315px;background:#fff;border-radius:4px;box-shadow:0 3px 8px rgba(9,30,66,0.13),0 0 2px rgba(9,30,66,0.16)"></div>
<div class="t sm" style="left:1560.4px;top:402.65px;font-size:16px;line-height:20px;color:#172B4D;font-weight:400;">Alerts</div>
<div class="t" style="right:32px;top:401.85px;font-size:14px;line-height:20px;color:#0C66E4;font-weight:400;">View all</div>
<div style="position:absolute;left:1544px;top:430px;width:360px;height:1px;background:#DCDFE4"></div>
<svg style="position:absolute;left:1670px;top:460px" width="110" height="92" viewBox="1670 460 110 92"><rect x="1683" y="488" width="61" height="60" fill="#C1C7D0"/><rect x="1689" y="498" width="2" height="1.2" fill="#EBECF0"/><rect x="1694" y="498" width="12" height="1.2" fill="#EBECF0"/><rect x="1689" y="503" width="2" height="1.2" fill="#EBECF0"/><rect x="1694" y="503" width="12" height="1.2" fill="#EBECF0"/><rect x="1689" y="508" width="2" height="1.2" fill="#EBECF0"/><rect x="1694" y="508" width="12" height="1.2" fill="#EBECF0"/><rect x="1689" y="513" width="2" height="1.2" fill="#EBECF0"/><rect x="1694" y="513" width="6" height="1.2" fill="#EBECF0"/><rect x="1689" y="518" width="2" height="1.2" fill="#EBECF0"/><rect x="1694" y="518" width="6" height="1.2" fill="#EBECF0"/><rect x="1704" y="527" width="10.5" height="1.2" fill="#EBECF0"/><rect x="1717" y="527" width="21" height="1.2" fill="#EBECF0"/><rect x="1705" y="532" width="25" height="1.2" fill="#EBECF0"/><rect x="1709" y="536.5" width="12" height="1.2" fill="#EBECF0"/><rect x="1707" y="463" width="61" height="60" fill="#1D2F52"/><rect x="1713" y="473.50" width="2" height="1.3" fill="#C1C7D0"/><rect x="1717" y="473.50" width="9" height="1.3" fill="#A5ADBA"/><rect x="1713" y="478.35" width="2" height="1.3" fill="#C1C7D0"/><rect x="1717" y="478.35" width="15" height="1.3" fill="#0065FF"/><rect x="1713" y="483.20" width="2" height="1.3" fill="#C1C7D0"/><rect x="1717" y="483.20" width="15" height="1.3" fill="#FFAB00"/><rect x="1713" y="488.05" width="2" height="1.3" fill="#C1C7D0"/><rect x="1726" y="488.05" width="14" height="1.3" fill="#fff"/><rect x="1713" y="492.90" width="2" height="1.3" fill="#C1C7D0"/><rect x="1726" y="492.90" width="14" height="1.3" fill="#A5ADBA"/><rect x="1713" y="497.75" width="2" height="1.3" fill="#C1C7D0"/><rect x="1717" y="497.75" width="15" height="1.3" fill="#A5ADBA"/><rect x="1735" y="497.75" width="9" height="1.3" fill="#FFAB00"/><rect x="1713" y="502.60" width="2" height="1.3" fill="#C1C7D0"/><rect x="1725" y="502.60" width="13" height="1.3" fill="#0065FF"/><rect x="1741" y="502.60" width="7" height="1.3" fill="#FFAB00"/><rect x="1713" y="507.45" width="2" height="1.3" fill="#C1C7D0"/><rect x="1725" y="507.45" width="25" height="1.3" fill="#0065FF"/><rect x="1713" y="512.30" width="2" height="1.3" fill="#C1C7D0"/><rect x="1733" y="512.30" width="12" height="1.3" fill="#C1C7D0"/><circle cx="1758.7" cy="496.6" r="11" fill="#344563"/><rect x="1749" y="490" width="12" height="2" fill="#fff"/><rect x="1749" y="498" width="13" height="2" fill="#FFC400"/><circle cx="1758.7" cy="496.6" r="11.5" fill="none" stroke="#0065FF" stroke-width="2.4"/><path d="M1767 505 L1773 511" stroke="#0065FF" stroke-width="2.4"/><circle cx="1689.7" cy="530" r="11" fill="#EBECF0"/><rect x="1687" y="527" width="6" height="2" fill="#fff"/><rect x="1687" y="534" width="6" height="2" fill="#fff"/><circle cx="1689.7" cy="530" r="11.5" fill="none" stroke="#0065FF" stroke-width="2.4"/><path d="M1681.5 538.5 L1675 545" stroke="#0065FF" stroke-width="2.4"/></svg>
<div class="t sb" style="left:1554.0px;width:340px;text-align:center;top:577.67px;font-size:20px;line-height:24px;color:#172B4D;font-weight:400;">Configure your alerts</div>
<div class="t" style="left:1554.0px;width:340px;text-align:center;top:613.05px;font-size:14px;line-height:20px;color:#172B4D;font-weight:400;">Be notified of important events in monitoring</div>
<div class="t" style="left:1554.0px;width:340px;text-align:center;top:632.95px;font-size:14px;line-height:20px;color:#172B4D;font-weight:400;">tools to ensure service health and quality.</div>
<div class="t" style="left:1554.0px;width:340px;text-align:center;top:668.15px;font-size:14px;line-height:20px;color:#0C66E4;font-weight:700;">Read more about alerting</div>
</body></html>
